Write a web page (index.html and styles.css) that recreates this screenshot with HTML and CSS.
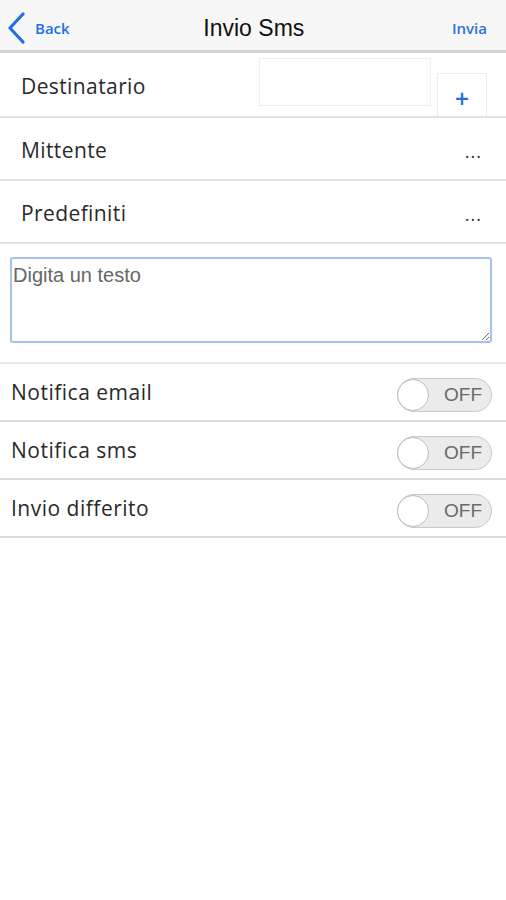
FILE: index.html
```html
<!DOCTYPE html>
<html lang="it">
<head>
    <meta charset="UTF-8">
    <meta name="viewport" content="width=device-width, initial-scale=1.0">
    <title>Invio Sms</title>
    <link rel="stylesheet" href="styles.css">
</head>
<body>

    <!-- Barra di navigazione -->
    <div class="navbar">
        <a class="nav-back" href="#">
            <svg class="chevron" width="20" height="32" viewBox="0 0 20 32">
                <path d="M17 2 L4 16 L17 30" fill="none" stroke="#1f6fe5" stroke-width="3.2" stroke-linecap="round" stroke-linejoin="round"/>
            </svg>
            <span>Back</span>
        </a>
        <div class="nav-title">Invio Sms</div>
        <a class="nav-action" href="#">Invia</a>
    </div>

    <div class="row row-dest">
        <div class="label">Destinatario</div>
        <div class="dest-box"></div>
        <div class="plus-btn">+</div>
    </div>
    <div class="row">
        <div class="label">Mittente</div>
        <div class="dots">...</div>
    </div>
    <div class="row">
        <div class="label">Predefiniti</div>
        <div class="dots">...</div>
    </div>

    <div class="text-area-wrap">
        <textarea class="message" placeholder="Digita un testo"></textarea>
    </div>

    <div class="switch-row">
        <div class="switch-label">Notifica email</div>
        <div class="switch"><span class="knob"></span><span class="off">OFF</span></div>
    </div>
    <div class="switch-row">
        <div class="switch-label">Notifica sms</div>
        <div class="switch"><span class="knob"></span><span class="off">OFF</span></div>
    </div>
    <div class="switch-row">
        <div class="switch-label">Invio differito</div>
        <div class="switch"><span class="knob"></span><span class="off">OFF</span></div>
    </div>

</body>
</html>
```

FILE: styles.css
```css
body {
    margin: 0;
    font-family: 'Open Sans', sans-serif;
    background: #fff;
    color: #2a2a2a;
}
.navbar {
    box-sizing: border-box;
    height: 53px;
    padding-top: 6px;
    background: #f7f7f7;
    border-bottom: 3px solid #d2d2d2;
    display: flex;
    align-items: center;
}
.nav-back {
    display: flex;
    align-items: center;
    padding-left: 6px;
    color: #1f6fe5;
    text-decoration: none;
    font-size: 15px;
    font-weight: 600;
}
.nav-back span {
    margin-left: 9px;
}
.nav-title {
    flex: 1;
    text-align: center;
    font-family: 'Liberation Sans', sans-serif;
    font-size: 23px;
    color: #111;
    margin-left: -14px;
}
.nav-action {
    color: #2a72e0;
    text-decoration: none;
    font-size: 15px;
    font-weight: 600;
    padding-right: 19px;
}
.row {
    height: 61px;
    border-bottom: 2px solid #e2e2e2;
    display: flex;
    align-items: center;
    padding: 0 24px 0 21px;
}
.row-dest {
    height: 63px;
    padding-right: 19px;
}
.label {
    flex: 1;
    font-size: 21px;
    letter-spacing: 0.4px;
    padding-top: 2px;
}
.dest-box {
    align-self: flex-start;
    margin-top: 5px;
    width: 170px;
    height: 46px;
    border: 1px solid #f0f0f0;
}
.plus-btn {
    align-self: flex-end;
    margin-left: 6px;
    width: 48px;
    height: 42px;
    border: 1px solid #ececec;
    border-bottom: 0;
    color: #1f6fe5;
    font-family: 'DejaVu Sans', sans-serif;
    font-weight: bold;
    font-size: 19px;
    text-align: center;
    line-height: 48px;
}
.dots {
    font-size: 18px;
    color: #333;
    letter-spacing: 1px;
    padding-top: 4px;
}
.text-area-wrap {
    padding: 13px 14px 19px 10px;
    border-bottom: 2px solid #e8e8e8;
}
.message {
    display: block;
    box-sizing: border-box;
    width: 100%;
    height: 86px;
    border: 2px solid #a9c0ef;
    border-radius: 3px;
    padding: 5px 1px;
    font-family: 'Liberation Sans', sans-serif;
    font-size: 20px;
    resize: vertical;
    outline: none;
}
.message::placeholder {
    color: #666;
}
.switch-row {
    height: 56px;
    border-bottom: 2px solid #dcdcdc;
    display: flex;
    align-items: center;
    padding: 0 14px 0 11px;
}
.switch-label {
    flex: 1;
    font-size: 21px;
    letter-spacing: 0.5px;
}
.switch {
    width: 93px;
    height: 32px;
    border: 1px solid #c9c9c9;
    border-radius: 17px;
    background: #ebebeb;
    display: flex;
    align-items: center;
    margin-top: 6px;
}
.knob {
    width: 32px;
    height: 32px;
    border-radius: 50%;
    background: #fff;
    border: 1px solid #bdbdbd;
    margin-left: -1px;
    box-sizing: border-box;
}
.off {
    flex: 1;
    text-align: center;
    font-family: 'Liberation Sans', sans-serif;
    font-size: 19px;
    color: #6a6a6a;
    padding-left: 6px;
}
```
